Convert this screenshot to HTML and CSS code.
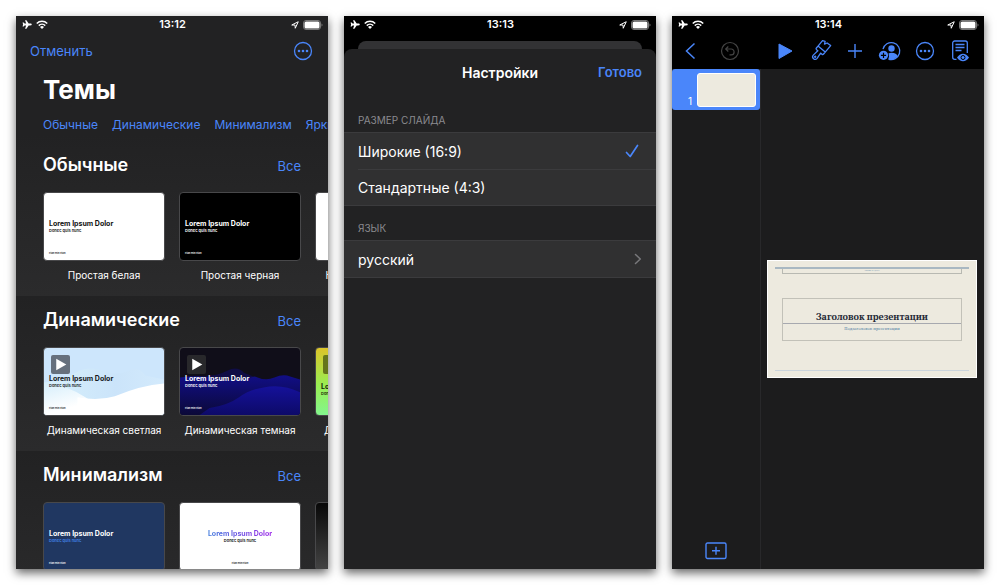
FILE: index.html
```html
<!DOCTYPE html>
<html lang="ru">
<head>
<meta charset="utf-8">
<title>Keynote</title>
<link rel="stylesheet" href="styles.css">
</head>
<body>
<svg class="defs" aria-hidden="true">
  <symbol id="plane" viewBox="0 0 18 16"><path d="M17.500 8c0-1-1-1.700-2-1.700h-3.500L8 .5H5.500l2 5.800H4.600L3 4.300H1L2 8l-1 3.700h2l1.600-2h2.900L5.500 15.500H8l4-5.800h3c1 0 2.500-.7 2.500-1.700z" fill="currentColor"/></symbol>
  <symbol id="wifi" viewBox="0 0 24 18"><path d="M1.500 7a15 15 0 0 1 21 0M5.500 11.300a9.300 9.300 0 0 1 13 0" fill="none" stroke="currentColor" stroke-width="3"/><path d="M12 18l-4-4a5.600 5.600 0 0 1 8 0z" fill="currentColor"/></symbol>
  <symbol id="locate" viewBox="0 0 16 16"><path d="M1.500 8L14.500 1.500 8.500 14.500 8 8z" fill="none" stroke="currentColor" stroke-width="2" stroke-linejoin="round"/></symbol>
  <symbol id="battery" viewBox="0 0 20 10"><rect x=".5" y=".5" width="17" height="9" rx="2.500" fill="none" stroke="#777"/><rect x="1.500" y="1.500" width="15" height="7" rx="1.500" fill="#fff"/><path d="M18.500 3.500q1 .4 1 1.500t-1 1.500z" fill="#777"/></symbol>
  <symbol id="more" viewBox="0 0 20 20"><circle cx="10" cy="10" r="8.500" fill="none" stroke="currentColor" stroke-width="1.300"/><g fill="currentColor"><circle cx="6" cy="10" r="1.300"/><circle cx="10" cy="10" r="1.300"/><circle cx="14" cy="10" r="1.300"/></g></symbol>
</svg>
<main class="screens">
  <section class="phone themes" aria-label="Темы">
    <div class="status"><span class="status-side"><svg class="plane"><use href="#plane"/></svg><svg class="wifi"><use href="#wifi"/></svg></span><time>13:12</time><span class="status-side end"><svg class="locate"><use href="#locate"/></svg><svg class="battery"><use href="#battery"/></svg></span></div>
    <header class="theme-bar"><button class="link">Отменить</button><button class="icon" aria-label="Ещё"><svg><use href="#more"/></svg></button></header>
    <h1>Темы</h1>
    <nav class="tabs"><a href="#basic">Обычные</a><a href="#dynamic">Динамические</a><a href="#minimal">Минимализм</a><a href="#bright">Яркие</a></nav>
    <section class="group" id="basic">
      <div class="group-head"><h2>Обычные</h2><a href="#basic">Все</a></div>
      <div class="cards">
        <figure><div class="slide white"><b>Lorem Ipsum Dolor</b><span>Donec quis nunc</span><small>Etiam enim Etiam</small></div><figcaption>Простая белая</figcaption></figure>
        <figure><div class="slide black"><b>Lorem Ipsum Dolor</b><span>Donec quis nunc</span><small>Etiam enim Etiam</small></div><figcaption>Простая черная</figcaption></figure>
        <figure><div class="slide white"></div><figcaption>Классическая белая</figcaption></figure>
      </div>
    </section>
    <section class="group" id="dynamic">
      <div class="group-head"><h2>Динамические</h2><a href="#dynamic">Все</a></div>
      <div class="cards">
        <figure><div class="slide light">
          <svg class="art" viewBox="0 0 122 68" preserveAspectRatio="none"><defs><linearGradient id="sky"><stop stop-color="#d7f0fb"/><stop offset=".6" stop-color="#cbe4fa"/><stop offset="1" stop-color="#d3eafc"/></linearGradient><linearGradient id="mist" x2=".5" y2="1"><stop stop-color="#d5eefb"/><stop offset=".8" stop-color="#fff"/></linearGradient></defs><path d="M0 35Q18 33 32 25T64 24Q75 28 86 23T103 28L122 32V68H0z" fill="url(#sky)"/><path d="M0 35Q24 38 42 50T60 53V68H0z" fill="url(#mist)"/><path d="M34 50Q55 54 72 49 98 38 122 36V68H34z" fill="#fff"/></svg>
          <i class="play"><svg viewBox="0 0 18 18"><path d="M5 3.500l9.500 5.500L5 14.500z" fill="#fff"/></svg></i><b>Lorem Ipsum Dolor</b><span>Donec quis nunc</span><small>Etiam enim Etiam</small></div><figcaption>Динамическая светлая</figcaption></figure>
        <figure><div class="slide dark">
          <svg class="art" viewBox="0 0 122 68" preserveAspectRatio="none"><defs><linearGradient id="wave" x2="0" y2="1"><stop stop-color="#110e86"/><stop offset="1" stop-color="#0b0938"/></linearGradient><linearGradient id="crest" x2="0" y2="1"><stop stop-color="#15119a"/><stop offset="1" stop-color="#0d0a68"/></linearGradient></defs><path d="M28 28Q38 28 48 23T65 25L85 33V50H28z" fill="#100d46"/><path d="M0 30Q20 27 38 31T76 29Q87 34 96 30T112 29L122 32V68H0z" fill="url(#wave)"/><path d="M30 61Q49 58 60 50T85 40Q104 36 122 45V68H20z" fill="url(#crest)"/></svg>
          <i class="play"><svg viewBox="0 0 18 18"><path d="M5 3.500l9.500 5.500L5 14.500z" fill="#fff"/></svg></i><b>Lorem Ipsum Dolor</b><span>Donec quis nunc</span><small>Etiam enim Etiam</small></div><figcaption>Динамическая темная</figcaption></figure>
        <figure><div class="slide vivid"><i class="play"></i><b>Lorem</b><span>Donec quis nunc</span></div><figcaption>Динамическая яркая</figcaption></figure>
      </div>
    </section>
    <section class="group" id="minimal">
      <div class="group-head"><h2>Минимализм</h2><a href="#minimal">Все</a></div>
      <div class="cards">
        <figure><div class="slide navy"><b>Lorem Ipsum Dolor</b><span>Donec quis nunc</span><small>Etiam enim Etiam</small></div></figure>
        <figure><div class="slide white centered"><b>Lorem Ipsum Dolor</b><span>Donec quis nunc</span><small>Etiam enim Etiam</small></div></figure>
        <figure><div class="slide graphite"></div></figure>
      </div>
    </section>
  </section>

  <section class="phone settings" aria-label="Настройки">
    <div class="status"><span class="status-side"><svg class="plane"><use href="#plane"/></svg><svg class="wifi"><use href="#wifi"/></svg></span><time>13:13</time><span class="status-side end"><svg class="locate"><use href="#locate"/></svg><svg class="battery"><use href="#battery"/></svg></span></div>
    <div class="sheet-back"></div>
    <div class="sheet">
      <header class="sheet-head"><h2>Настройки</h2><button class="link">Готово</button></header>
      <h3>Размер слайда</h3>
      <div class="list"><button class="row"><span>Широкие (16:9)</span><svg class="check" viewBox="0 0 14 14"><path d="M1.500 8.500l3.700 4L12.500 1.500" fill="none" stroke="currentColor" stroke-width="1.700" stroke-linecap="round" stroke-linejoin="round"/></svg></button><button class="row"><span>Стандартные (4:3)</span></button></div>
      <h3 class="lang-title">Язык</h3>
      <div class="list"><button class="row"><span>русский</span><svg class="chevron" viewBox="0 0 8 12"><path d="M1.500 1.500L6.300 6l-4.800 4.500" fill="none" stroke="currentColor" stroke-width="1.500" stroke-linecap="round" stroke-linejoin="round"/></svg></button></div>
    </div>
  </section>

  <section class="phone editor" aria-label="Редактор">
    <div class="status"><span class="status-side"><svg class="plane"><use href="#plane"/></svg><svg class="wifi"><use href="#wifi"/></svg></span><time>13:14</time><span class="status-side end"><svg class="locate"><use href="#locate"/></svg><svg class="battery"><use href="#battery"/></svg></span></div>
    <header class="tools">
      <div class="tool-set">
        <button class="icon" aria-label="Назад"><svg viewBox="0 0 24 24"><path d="M15.500 4.500L7.500 12l8 7.500" fill="none" stroke="currentColor" stroke-width="1.500"/></svg></button>
        <button class="icon off" aria-label="Отменить" disabled><svg viewBox="0 0 24 24" fill="none" stroke="currentColor" stroke-width="1.200"><circle cx="12" cy="12" r="8.500"/><path d="M10.300 7.500L7.700 10l2.600 2.500M7.900 10h5.300a2.900 2.900 0 0 1 0 5.800h-1.700"/></svg></button>
      </div>
      <div class="tool-set wide">
        <button class="icon" aria-label="Воспроизвести"><svg viewBox="0 0 24 24"><path d="M6 5L19 12 6 19.500z" fill="currentColor" stroke="currentColor" stroke-linejoin="round"/></svg></button>
        <button class="icon" aria-label="Формат"><svg viewBox="0 0 24 24" fill="none" stroke="currentColor" stroke-width="1.300" stroke-linejoin="round"><g transform="rotate(40 12 12)"><path d="M7.300 9.500V2.500l2.400-1.200 1.300 2.500 1.300-2.500L16.700 1v8.500zM7.300 9.500V12q0 1.200 1.200 1.200h1.700l-.7 6.300a2.500 2.500 0 0 0 5 0l-.7-6.300h1.700q1.200 0 1.200-1.200V9.500"/><circle cx="12" cy="19.500" r=".5" fill="currentColor"/></g></svg></button>
        <button class="icon" aria-label="Добавить"><svg viewBox="0 0 24 24"><path d="M12 5v14M5 12h14" stroke="currentColor" stroke-width="1.400"/></svg></button>
        <button class="icon" aria-label="Соавторы"><svg viewBox="0 0 24 24"><path d="M5 10.200a8.500 8.500 0 1 1 5.500 9.900" fill="none" stroke="currentColor" stroke-width="1.300"/><circle cx="13.500" cy="9.500" r="3.200" fill="currentColor"/><path d="M10.500 14.500q1.300-.7 3-.7c3.500 0 5.500 1.500 6.200 3.500q-3 3.200-6.500 3.200l-2.700-.5q1.200-3 0-5.500z" fill="currentColor"/><circle cx="5.500" cy="16.300" r="4.600" fill="currentColor"/><path d="M5.500 13.700v5.200M2.900 16.300h5.200" stroke="#000" stroke-width="1.200"/></svg></button>
        <button class="icon" aria-label="Ещё"><svg viewBox="-2 -2 24 24"><use href="#more" width="20" height="20"/></svg></button>
        <button class="icon" aria-label="Просмотр"><svg viewBox="0 0 24 24"><path d="M8.500 20.300H6.700a2 2 0 0 1-2-2V4a2 2 0 0 1 2-2h10.600a2 2 0 0 1 2 2v10M7.500 5.500h9M7.500 8.500h9M7.500 11.500h6" fill="none" stroke="currentColor" stroke-width="1.300"/><path d="M9 18.500q2.500-3.800 6-3.800t6 3.800q-2.500 3.800-6 3.800T9 18.500z" fill="currentColor"/><circle cx="15" cy="18.500" r="2" fill="none" stroke="#000" stroke-width="1"/></svg></button>
      </div>
    </header>
    <div class="workspace">
      <aside class="navigator"><button class="thumb" aria-label="Слайд 1"><span>1</span><i></i></button><button class="add-slide" aria-label="Добавить слайд"><svg viewBox="0 0 22 18" fill="none" stroke="currentColor"><rect x="1" y="1" width="20" height="15.500" rx="1.500" stroke-width="1.400"/><path d="M11 4.800v8M7 8.800h8" stroke-width="1.400"/></svg></button></aside>
      <div class="canvas"><article class="page">
        <div class="rule"></div>
        <div class="author">АВТОР И ДАТА</div>
        <div class="title-box"><h2>Заголовок презентации</h2><p>Подзаголовок презентации</p></div>
        <hr>
      </article></div>
    </div>
  </section>
</main>
</body>
</html>
```
FILE: styles.css
```css
* { box-sizing: border-box; }
body { margin: 0; background: #fff; color: #fff; font-family: Inter, "Noto Sans", sans-serif; font-size: 13px; }
h1, h2, h3, p, figure { margin: 0; }
button { margin: 0; padding: 0; border: 0; background: none; color: inherit; font: inherit; text-align: left; }
a { color: inherit; text-decoration: none; }
svg { display: block; }
.defs { position: absolute; width: 0; height: 0; }

.screens { --blue: #4a86fa; display: grid; grid-template-columns: repeat(3, minmax(0, 1fr)); gap: 16px; height: 100vh; padding: 16px; }
.phone { display: flex; flex-direction: column; min-height: 0; overflow: hidden; background: #222223; box-shadow: 0 4px 9px rgba(0, 0, 0, .6); }

.status { display: grid; grid-template-columns: 1fr auto 1fr; align-items: center; flex: none; height: 17px; padding: 0 5px 0 6px; font-size: 11px; font-weight: 600; line-height: 17px; }
.status-side { display: flex; align-items: center; gap: 4px; }
.status-side.end { justify-content: flex-end; }
.plane { width: 10px; height: 9px; }
.wifi { width: 12px; height: 9px; }
.locate { width: 8px; height: 8px; }
.battery { width: 20px; height: 10px; }

.link { color: var(--blue); }
.icon { flex: none; color: var(--blue); }
.icon.off { color: #444; }

.theme-bar { display: flex; align-items: center; justify-content: space-between; flex: none; height: 36px; padding: 0 15px 0 14px; }
.theme-bar svg { width: 20px; height: 20px; }
h1 { flex: none; padding: 4px 27px 0; font-size: 26px; line-height: 34px; font-weight: 700; }
.tabs { display: flex; flex: none; gap: 14px; padding: 9px 0 0 27px; color: var(--blue); font-size: 12px; line-height: 18px; white-space: nowrap; }
.group { flex: none; height: 155px; padding: 14px 0 0 27px; background: linear-gradient(#222223, #2b2b2c); }
#basic { height: 162px; padding-top: 21px; }
.group-head { display: flex; align-items: center; justify-content: space-between; height: 20px; padding-right: 27px; }
.group-head h2 { font-size: 18px; line-height: 20px; font-weight: 600; }
.group-head a { padding-top: 2px; color: var(--blue); font-size: 13px; }
.cards { display: grid; grid-template-columns: repeat(3, 122px); gap: 14px; padding-top: 17px; }
figcaption { padding-top: 6px; font-size: 10px; line-height: 16px; text-align: center; white-space: nowrap; }
.slide { display: flex; flex-direction: column; position: relative; height: 69px; padding: 26px 5px 5px; overflow: hidden; border: 1px solid #48484a; border-radius: 4px; font-family: Inter, sans-serif; }
.slide b { position: relative; font-size: 7px; line-height: 9px; font-weight: 700; white-space: nowrap; }
.slide span { position: relative; font-size: 4px; line-height: 5px; font-weight: 600; }
.slide small { position: relative; margin-top: auto; font-size: 2px; line-height: 3px; font-weight: 600; }
.white { background: #fff; color: #111; }
.black { background: #000; }
.light { background: #cde6fc; color: #151820; }
.dark { background: #100e19; }
.vivid { background: linear-gradient(#dcc42a, #99ed52 55%, #83f58d); color: #151d05; }
.vivid b { padding-top: 9px; line-height: 8px; }
.navy { background: #203761; }
.navy span { color: #4283e6; }
.graphite { background: linear-gradient(#080808, #444); }
.centered { align-items: center; }
.centered b { background: linear-gradient(90deg, #3c78dc, #9b24e8); background-clip: text; color: transparent; }
.art { position: absolute; inset: 0; width: 100%; height: 100%; }
.play { position: absolute; top: 7px; left: 7px; width: 19px; height: 19px; border-radius: 2px; background: #66707d; }
.dark .play { background: #28282b; }
.vivid .play { background: #65751b; }

.settings { background: #000; }
.sheet-back { flex: none; height: 8px; margin: 8px 14px 0; border-radius: 8px 8px 0 0; background: #323234; }
.sheet { flex: 1; border-radius: 8px 8px 0 0; background: #222223; }
.sheet-head { display: grid; grid-template-columns: 1fr auto 1fr; align-items: center; height: 46px; padding: 0 14px; }
.sheet-head h2 { grid-column: 2; font-size: 14px; font-weight: 600; }
.sheet-head .link { justify-self: end; font-weight: 600; }
h3 { padding: 17px 14px 4px; color: #8b8b90; font-size: 10px; line-height: 16px; font-weight: 400; text-transform: uppercase; }
.lang-title { padding-top: 14px; }
.list { border: solid #3b3b3d; border-width: 1px 0; background: #303031; }
.row { display: flex; align-items: center; justify-content: space-between; position: relative; width: 100%; height: 36px; padding: 0 14px; font-size: 14px; }
.row + .row::before { content: ""; position: absolute; top: 0; right: 0; left: 14px; height: 1px; background: #3b3b3d; }
.check { width: 14px; height: 14px; margin-right: 3px; color: var(--blue); }
.chevron { width: 8px; height: 12px; color: #78787b; }

.editor { background: #000; }
.tools { display: flex; align-items: center; justify-content: space-between; flex: none; height: 36px; padding: 0 12px 0 7px; }
.tools svg { width: 24px; height: 24px; }
.tool-set { display: flex; gap: 15px; }
.tool-set.wide { gap: 11px; }
.workspace { display: flex; flex: 1; min-height: 0; background: #1c1c1d; }
.navigator { display: flex; flex-direction: column; flex: none; width: 89px; border-right: 1px solid #28282a; }
.thumb { display: flex; justify-content: space-between; align-items: center; width: 88px; height: 41px; padding: 4px 4px 4px 16px; border-radius: 3px; background: var(--blue); }
.thumb span { align-self: flex-end; font-size: 10px; line-height: 10px; }
.thumb i { width: 59px; height: 34px; border: 1px solid #fff; border-radius: 3px; background: #edeadf; }
.add-slide { margin: auto auto 9px 33px; color: var(--blue); }
.add-slide svg { width: 22px; height: 18px; }
.canvas { display: flex; align-items: center; flex: 1; min-width: 0; padding: 0 7px 0 6px; }
.page { display: flex; flex-direction: column; width: 100%; height: 118px; padding: 6px 7px; border: 1px solid #fff; background: #edeadf; color: #252936; font-family: "Noto Serif", "Liberation Serif", serif; text-align: center; }
.rule { height: 2px; background: #a9b8c2; }
.author { height: 5px; margin: 0 7px; border: 1px solid #b8b9b2; border-top: 0; color: #5583a6; font-size: 2px; line-height: 4px; }
.title-box { height: 43px; margin: 24px 7px 0; padding-top: 12px; border: 1px solid #c2c1b8; }
.title-box h2 { border-bottom: 1px solid #a7a9af; font-size: 9px; line-height: 12px; font-weight: 700; }
.title-box p { color: #5583a6; font-size: 4px; line-height: 9px; }
hr { width: 100%; margin: auto 0 0; border: 0; border-top: 1px solid #cbd4dc; }
```
